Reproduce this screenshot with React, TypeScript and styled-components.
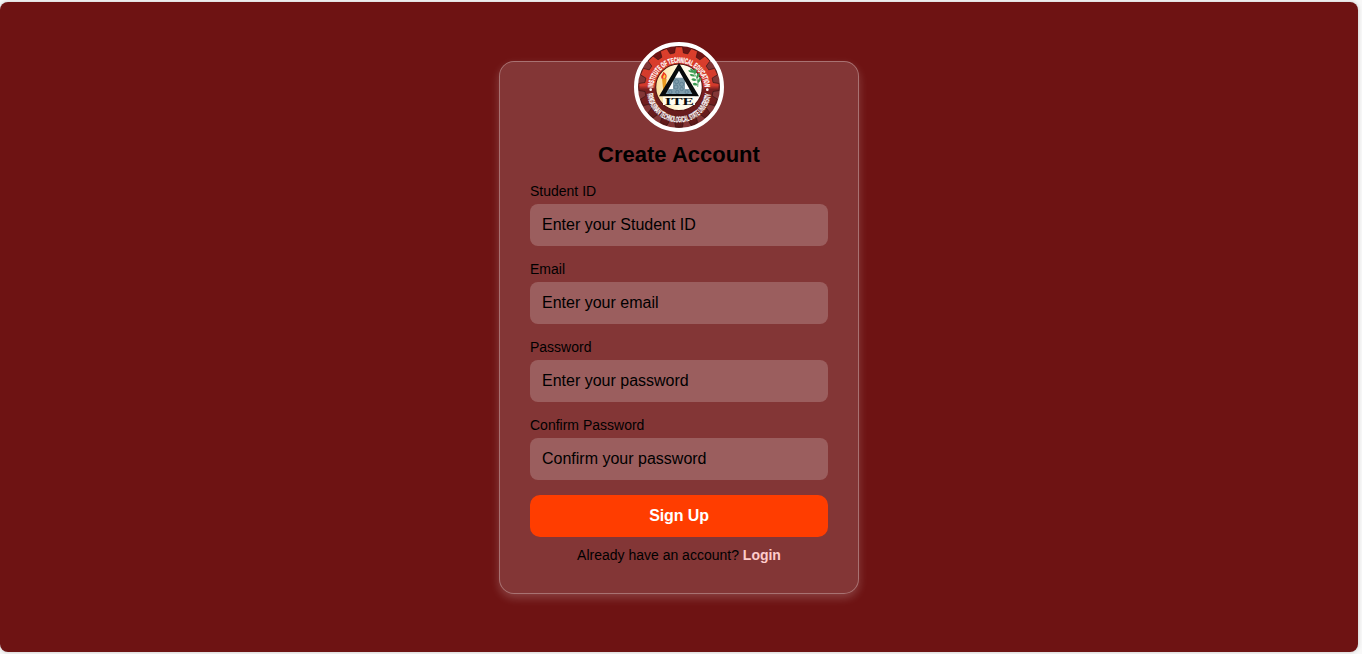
import React from "react";
import styled, { createGlobalStyle } from "styled-components";

const GlobalStyle = createGlobalStyle`
  * { box-sizing: border-box; }
  body {
    margin: 0;
    background: #f8f8f8;
    font-family: "Liberation Sans", Arial, sans-serif;
    overflow: hidden;
  }
`;

const Page = styled.div`
  height: 654px;
  padding: 2px 4px 2px 0;
`;

const Stage = styled.main`
  height: 650px;
  display: flex;
  justify-content: center;
  align-items: flex-start;
  padding-top: 59px;
  border-radius: 8px;
  background: #6e1313;
  box-shadow: 0 0 4px rgba(0, 0, 0, 0.2);
`;

const Card = styled.form`
  width: 360px;
  height: 533px;
  display: flex;
  flex-direction: column;
  padding: 0 30px 30px;
  border: 1px solid rgba(255, 255, 255, 0.3);
  border-radius: 15px;
  background: rgba(255, 255, 255, 0.15);
  box-shadow: 0 4px 10px rgba(255, 255, 255, 0.2);
`;

const Badge = styled.div`
  width: 90px;
  height: 90px;
  margin: -20px auto 0;
  border: 4px solid #fff;
  border-radius: 50%;
  overflow: hidden;
  flex: none;

  svg { display: block; width: 82px; height: 82px; }
`;

const Title = styled.h2`
  margin: 10px 0 16px;
  color: #000;
  font-size: 22px;
  line-height: 25px;
  text-align: center;
`;

const Field = styled.label`
  display: flex;
  flex-direction: column;
  gap: 5px;
  margin-bottom: 15px;
  color: #000;
  font-size: 14px;
  line-height: 16px;
`;

const Input = styled.input`
  width: 100%;
  height: 42px;
  padding: 12px;
  border: 0;
  border-radius: 8px;
  outline: 0;
  background: rgba(255, 255, 255, 0.2);
  color: #000;
  font: 16px "Liberation Sans", Arial, sans-serif;

  &::placeholder { color: #000; opacity: 1; }
`;

const Submit = styled.button`
  height: 42px;
  padding: 0;
  border: 0;
  border-radius: 10px;
  background: #ff3d00;
  color: #fff;
  font: bold 16px "Liberation Sans", Arial, sans-serif;
  letter-spacing: -0.1px;
`;

const Footer = styled.p`
  margin: 10px 0 0;
  color: #000;
  font-size: 14px;
  line-height: 16px;
  text-align: center;
`;

const LoginLink = styled.a`
  color: #ffcccb;
  font-weight: bold;
  text-decoration: none;
`;

const TOOTH_COUNT = 16;

const gearPath = (() => {
  const points: string[] = [];
  const step = 360 / TOOTH_COUNT;
  for (let i = 0; i < TOOTH_COUNT; i++) {
    const corners = [[-7.5, 103], [-5, 121], [5, 121], [7.5, 103]];
    for (const [offset, radius] of corners) {
      const a = ((i * step + offset - 90) * Math.PI) / 180;
      points.push(`${(150 + radius * Math.cos(a)).toFixed(1)} ${(150 + radius * Math.sin(a)).toFixed(1)}`);
    }
  }
  return `M${points.join("L")}Z`;
})();

const Seal = () => (
  <svg viewBox="27 27 246 246" aria-label="ITE">
    <defs>
      <linearGradient id="gear" x1="0" y1="0" x2="0" y2="1">
        <stop offset="0" stopColor="#dd3f2b" />
        <stop offset="0.48" stopColor="#d23a2d" />
        <stop offset="0.53" stopColor="#7a2020" />
        <stop offset="1" stopColor="#5c1a1a" />
      </linearGradient>
      <linearGradient id="disc" x1="0" y1="0" x2="1" y2="0">
        <stop offset="0" stopColor="#fbdf9a" />
        <stop offset="0.5" stopColor="#fffae0" />
        <stop offset="1" stopColor="#fff" />
      </linearGradient>
      <path id="upper" d="M73 154A77 77 0 0 1 227 154" />
      <path id="lower" d="M54 160A96 96 0 0 0 246 160" />
    </defs>
    <path d={gearPath} fill="url(#gear)" stroke="#351313" strokeWidth="2" />
    <g fill="#fff" stroke="#fff" strokeWidth="0.8" fontFamily="Liberation Sans, sans-serif" fontWeight="bold">
      <text fontSize="23">
        <textPath href="#upper" startOffset="2" textLength="236" lengthAdjust="spacingAndGlyphs">INSTITUTE OF TECHNICAL EDUCATION</textPath>
      </text>
      <text fontSize="25">
        <textPath href="#lower" startOffset="10" textLength="280" lengthAdjust="spacingAndGlyphs">PANGASINAN TECHNOLOGICAL STATE UNIVERSITY</textPath>
      </text>
    </g>
    <circle cx="65" cy="158" r="4" fill="#fff" />
    <circle cx="235" cy="158" r="4" fill="#fff" />
    <circle cx="150" cy="151" r="70" fill="url(#disc)" stroke="#571713" strokeWidth="3.5" />
    <path d="M99 125h14l-4 38h-6Z" fill="#e99b20" />
    <path d="M98 125c-4-10 3-12 5-21 8 6 13 11 8 21Z" fill="#ec3825" />
    <path d="M103 124c-2-7 2-8 4-12 4 6 3 8 1 12Z" fill="#ffd43b" />
    <path d="M206 150C210 130 201 112 184 98" fill="none" stroke="#218544" strokeWidth="2" />
    <g fill="#3d9d55">
      <path d="M185 99q-4-8 7-1 7 5 3 9Zm7 8q-14 0-14-7 11-2 16 7Zm3 2q-2-13 6-14 5 8-3 17Zm4 9q-15 3-17-6 11-3 17 6Zm3 3q2-15 10-13 1 10-8 17Zm2 9q-13 5-17-3 7-7 17 3Zm2 4q3-14 10-11 0 10-9 15Zm1 10q-13 5-16-4 8-7 16 4Z" />
    </g>
    <path d="M150 91L96 176h108Z" fill="#fff" />
    <path d="M132 122h36v34h14l10 15h-84l10-15h14Z" fill="#7f9dac" />
    <g fill="none" stroke="#4b6e85" strokeWidth="1.8">
      <circle cx="143" cy="134" r="6" />
      <circle cx="158" cy="142" r="6" />
      <circle cx="141" cy="150" r="6" />
      <circle cx="158" cy="156" r="5" />
      <circle cx="124" cy="165" r="5" />
      <circle cx="145" cy="165" r="5" />
      <circle cx="173" cy="165" r="5" />
    </g>
    <path fillRule="evenodd" d="M150 78L90 178h120ZM150 101L190 171H110Z" fill="#080b0c" />
    <path d="M102 179h96v25h-96Z" fill="#fffdf0" />
    <text x="151" y="204" textAnchor="middle" textLength="88" lengthAdjust="spacingAndGlyphs" fontFamily="Liberation Serif, serif" fontSize="28" fontWeight="bold" fill="#080b0c">ITE</text>
  </svg>
);

const fields = [
  { label: "Student ID", type: "text", placeholder: "Enter your Student ID" },
  { label: "Email", type: "email", placeholder: "Enter your email" },
  { label: "Password", type: "password", placeholder: "Enter your password" },
  { label: "Confirm Password", type: "password", placeholder: "Confirm your password" },
];

export default function App() {
  return (
    <>
      <GlobalStyle />
      <Page>
        <Stage>
          <Card onSubmit={(e: React.FormEvent) => e.preventDefault()}>
            <Badge><Seal /></Badge>
            <Title>Create Account</Title>
            {fields.map((f) => (
              <Field key={f.label}>
                {f.label}
                <Input type={f.type} placeholder={f.placeholder} />
              </Field>
            ))}
            <Submit type="submit">Sign Up</Submit>
            <Footer>
              Already have an account? <LoginLink href="#">Login</LoginLink>
            </Footer>
          </Card>
        </Stage>
      </Page>
    </>
  );
}
